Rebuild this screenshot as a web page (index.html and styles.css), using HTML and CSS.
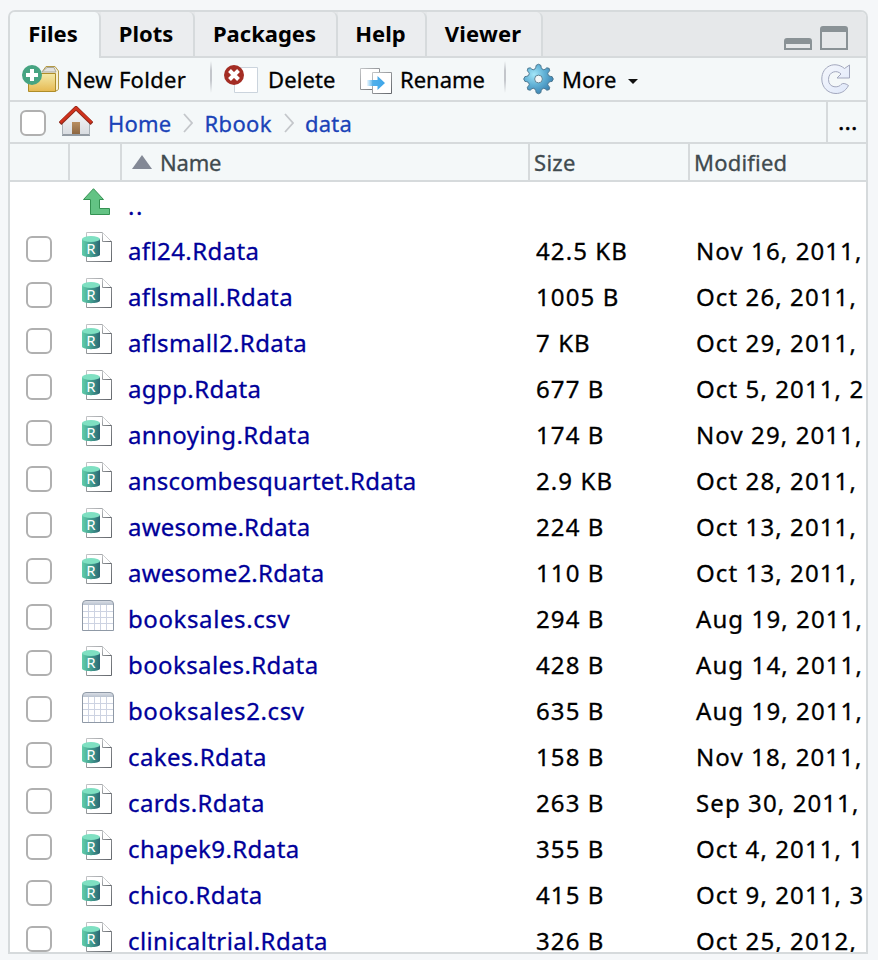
FILE: index.html
```html
<!DOCTYPE html>
<html lang="en">
<head>
<meta charset="utf-8">
<title>Files</title>
<link rel="stylesheet" href="styles.css">
</head>
<body>
<svg class="defs" width="0" height="0" aria-hidden="true">
  <defs>
    <linearGradient id="cyl" x1="0" x2="1" y1="0" y2="0"><stop offset="0" stop-color="#62cdaa"/><stop offset=".5" stop-color="#439f90"/><stop offset="1" stop-color="#2b6672"/></linearGradient>
    <linearGradient id="edge" x1="0" x2="1" y1="0" y2="1"><stop offset="0" stop-color="#c4c6c8"/><stop offset="1" stop-color="#62666b"/></linearGradient>
    <linearGradient id="cap" x1="0" x2="0" y1="0" y2="1"><stop offset="0" stop-color="#dde1e8"/><stop offset="1" stop-color="#b9c2cf"/></linearGradient>
    <linearGradient id="gold" x1="0" x2="0" y1="0" y2="1"><stop offset="0" stop-color="#f3eaa9"/><stop offset="1" stop-color="#e6b951"/></linearGradient>
    <linearGradient id="wall" x1="0" x2="0" y1="0" y2="1"><stop offset="0" stop-color="#fafafa"/><stop offset="1" stop-color="#d7dbe0"/></linearGradient>
    <linearGradient id="door" x1="0" x2="0" y1="0" y2="1"><stop offset="0" stop-color="#b98e61"/><stop offset="1" stop-color="#8d6742"/></linearGradient>
    <linearGradient id="arrow" x1="0" x2="1" y1="0" y2="0"><stop offset="0" stop-color="#4fb0ec" stop-opacity=".1"/><stop offset=".35" stop-color="#4fb0ec"/><stop offset="1" stop-color="#3fa5e8"/></linearGradient>
    <linearGradient id="swirl" x1="0" x2="1" y1="0" y2="1"><stop offset="0" stop-color="#f5f7fc"/><stop offset="1" stop-color="#dfe8fa"/></linearGradient>
    <radialGradient id="blue" cx=".35" cy=".35" r=".7"><stop offset="0" stop-color="#a3e6f8"/><stop offset=".5" stop-color="#62b2d6"/><stop offset="1" stop-color="#3b82b2"/></radialGradient>
    <symbol id="rdata" viewBox="0 0 30 30">
      <path d="M4.500.5H20.500L29.500 9.500V29.500H4.500Z" fill="#fff" stroke="url(#edge)"/>
      <path d="M20.500.5V9.500H29.500" fill="#fff" stroke="url(#edge)"/>
      <path d="M0 7V22.500C0 26 18 26 18 22.500V7Z" fill="url(#cyl)"/>
      <ellipse cx="9" cy="7" rx="9" ry="3" fill="#7fe0c2"/>
      <text x="9" y="21.500" class="glyph" text-anchor="middle">R</text>
    </symbol>
    <symbol id="csv" viewBox="0 0 32 31">
      <path d="M.5 30.500V4Q.5.5 4 .5H28Q31.500.5 31.500 4V30.500Z" fill="#fff"/>
      <path d="M.5 5V4Q.5.5 4 .5H28Q31.500.5 31.500 4V5Z" fill="url(#cap)"/>
      <path d="M1 11.500H31M1 17.500H31M1 23.500H31M6.500 5V30M12.500 5V30M18.500 5V30M24.500 5V30" stroke="#cdd3e2" fill="none"/>
      <path d="M.5 30.500V4Q.5.5 4 .5H28Q31.500.5 31.500 4V30.500Z" fill="none" stroke="#8f99a6"/>
    </symbol>
  </defs>
</svg>
<main class="panel">
  <nav class="tabs">
    <a class="tab active">Files</a><a class="tab plots">Plots</a><a class="tab packages">Packages</a><a class="tab help">Help</a><a class="tab viewer">Viewer</a>
    <div class="window-buttons">
      <svg width="28" height="12" viewBox="0 0 28 12"><path d="M0 12V3Q0 0 3 0H25Q28 0 28 3V12ZM2 6V10H26V6Z" fill="#8a9296" fill-rule="evenodd"/></svg>
      <svg width="28" height="24" viewBox="0 0 28 24"><path d="M0 24V3Q0 0 3 0H25Q28 0 28 3V24ZM2 6V22H26V6Z" fill="#8a9296" fill-rule="evenodd"/></svg>
    </div>
  </nav>
  <div class="toolbar">
    <button class="tool new-folder">
      <svg width="38" height="30" viewBox="0 0 38 30">
        <path d="M20 8L24 2.500H33L36.500 7V25Q36 27 33 27" fill="#f7f1d5" stroke="#b49a45"/>
        <path d="M20 8L25 3.500H32L34 8Z" fill="#e2e2df" stroke="#aaa89a"/>
        <path d="M6.500 9.500H33.500V27.500H6.500Z" fill="url(#gold)" stroke="#af8d28"/>
        <circle cx="10" cy="11" r="10" fill="#46a482"/>
        <path d="M10 5V17M4 11H16" stroke="#fff" stroke-width="4"/>
      </svg><span>New Folder</span>
    </button>
    <i class="divider"></i>
    <button class="tool delete">
      <svg width="34" height="30" viewBox="0 0 34 30">
        <path d="M10.500 3.500H33.500V28.500H10.500Z" fill="#fff" stroke="#cbd4dd"/>
        <circle cx="10" cy="11" r="10" fill="#a42d24"/>
        <path d="M5.500 6.500L14.500 15.500M14.500 6.500L5.500 15.500" stroke="#fff" stroke-width="4"/>
      </svg><span>Delete</span>
    </button>
    <button class="tool rename">
      <svg width="32" height="26" viewBox="0 0 32 26">
        <path d="M.5.5H19.500V21.500H.5Z" fill="#fff" stroke="url(#edge)"/>
        <path d="M12.500 4.500H31.500V25.500H12.500Z" fill="#fff" stroke="url(#edge)"/>
        <path d="M7 12H17.500V8L25 15L17.500 22V18H7Z" fill="url(#arrow)"/>
      </svg><span>Rename</span>
    </button>
    <i class="divider second"></i>
    <button class="tool more">
      <svg width="31" height="32" viewBox="-16 -16 32 32">
        <path d="M-3.500 -10.500Q-2.500 -12 -2.500 -14Q0 -16.500 2.500 -14Q2.500 -12 3.500 -10.500L5.500 -9.500Q7 -10 8.500 -11.500Q12 -12 11.500 -8.500Q10 -7 9.500 -5.500L10.500 -3.500Q12 -2.500 14 -2.500Q16.500 0 14 2.500Q12 2.500 10.500 3.500L9.500 5.500Q10 7 11.500 8.500Q12 12 8.500 11.500Q7 10 5.500 9.500L3.500 10.500Q2.500 12 2.500 14Q0 16.500 -2.500 14Q-2.500 12 -3.500 10.500L-5.500 9.500Q-7 10 -8.500 11.500Q-12 12 -11.500 8.500Q-10 7 -9.500 5.500L-10.500 3.500Q-12 2.500 -14 2.500Q-16.500 0 -14 -2.500Q-12 -2.500 -10.500 -3.500L-9.500 -5.500Q-10 -7 -11.500 -8.500Q-12 -12 -8.500 -11.500Q-7 -10 -5.500 -9.500Z" fill="url(#blue)" stroke="#4d7890" stroke-linejoin="round"/>
        <circle r="4" fill="#f4f8f9" stroke="#5d8194"/>
      </svg><span>More</span>
      <svg class="caret" width="10" height="5" viewBox="0 0 10 5"><path d="M0 0H10L5 5Z" fill="#111"/></svg>
    </button>
    <svg class="refresh" width="30" height="30" viewBox="0 0 30 30"><path d="M23.500 4.500L28.500 1V14H16L20 10C16 5.500 7.500 7.500 7.500 15.500C7.500 24.500 18 24 20 20.500Q22.500 18 27.500 21.500C24.500 27.500 19.500 29.500 15 29.500C7 29.500.8 23.500.8 15C.8 2 14-3.500 23.500 4.500Z" fill="url(#swirl)" stroke="#a2a7bd"/></svg>
  </div>
  <div class="path">
    <input type="checkbox" class="check">
    <svg class="home" width="34" height="31" viewBox="0 0 34 31">
      <path d="M3.500 16L17 3L30.500 16V29.500H3.500Z" fill="url(#wall)"/>
      <path d="M3 29H31" stroke="#939ba3" stroke-width="2"/><path d="M3.500 17V29M30.500 17V29" stroke="#a9b0b6"/>
      <path d="M13 16H21V28H13Z" fill="url(#door)"/>
      <path d="M1 17.500L17 2L33 17.500" fill="none" stroke="#8b281a" stroke-width="4"/>
      <path d="M1.500 16.500L17 2L32.500 16.500" fill="none" stroke="#cf321d" stroke-width="2.500"/>
    </svg>
    <a class="crumb">Home</a>
    <svg class="chevron" width="10" height="20" viewBox="0 0 10 20"><path d="M1 1L9 10L1 19" fill="none" stroke="#c4c7cb" stroke-width="1.800"/></svg>
    <a class="crumb rbook">Rbook</a>
    <svg class="chevron" width="10" height="20" viewBox="0 0 10 20"><path d="M1 1L9 10L1 19" fill="none" stroke="#c4c7cb" stroke-width="1.800"/></svg>
    <a class="crumb data">data</a>
    <a class="browse">...</a>
  </div>
  <div class="head cols">
    <div></div><div></div>
    <div class="name-head"><svg width="20" height="14" viewBox="0 0 20 14"><path d="M0 14L10 0L20 14Z" fill="#838996"/></svg>Name</div>
    <div>Size</div><div>Modified</div>
  </div>
  <div class="list">
    <div class="row cols up"><span></span><svg class="icon" width="28" height="28" viewBox="0 0 28 28"><path d="M11.500.7L21.500 11.500H17.500V20.500H27.500V26.500H8.500V11.500H1.500Z" fill="#63c384" stroke="#359253" stroke-linejoin="round"/></svg><a>..</a><span></span><span></span></div>
    <div class="row cols"><input type="checkbox" class="check"><svg class="icon" width="30" height="30"><use href="#rdata"/></svg><a>afl24.Rdata</a><span class="num">42.5 KB</span><span class="num date">Nov 16, 2011,</span></div>
    <div class="row cols"><input type="checkbox" class="check"><svg class="icon" width="30" height="30"><use href="#rdata"/></svg><a>aflsmall.Rdata</a><span class="num">1005 B</span><span class="num date">Oct 26, 2011,</span></div>
    <div class="row cols"><input type="checkbox" class="check"><svg class="icon" width="30" height="30"><use href="#rdata"/></svg><a>aflsmall2.Rdata</a><span class="num">7 KB</span><span class="num date">Oct 29, 2011,</span></div>
    <div class="row cols"><input type="checkbox" class="check"><svg class="icon" width="30" height="30"><use href="#rdata"/></svg><a>agpp.Rdata</a><span class="num">677 B</span><span class="num date">Oct 5, 2011, 2</span></div>
    <div class="row cols"><input type="checkbox" class="check"><svg class="icon" width="30" height="30"><use href="#rdata"/></svg><a>annoying.Rdata</a><span class="num">174 B</span><span class="num date">Nov 29, 2011,</span></div>
    <div class="row cols"><input type="checkbox" class="check"><svg class="icon" width="30" height="30"><use href="#rdata"/></svg><a class="long">anscombesquartet.Rdata</a><span class="num">2.9 KB</span><span class="num date">Oct 28, 2011,</span></div>
    <div class="row cols"><input type="checkbox" class="check"><svg class="icon" width="30" height="30"><use href="#rdata"/></svg><a class="long">awesome.Rdata</a><span class="num">224 B</span><span class="num date">Oct 13, 2011,</span></div>
    <div class="row cols"><input type="checkbox" class="check"><svg class="icon" width="30" height="30"><use href="#rdata"/></svg><a class="long">awesome2.Rdata</a><span class="num">110 B</span><span class="num date">Oct 13, 2011,</span></div>
    <div class="row cols"><input type="checkbox" class="check"><svg class="icon" width="32" height="31"><use href="#csv"/></svg><a class="csv">booksales.csv</a><span class="num">294 B</span><span class="num date">Aug 19, 2011,</span></div>
    <div class="row cols"><input type="checkbox" class="check"><svg class="icon" width="30" height="30"><use href="#rdata"/></svg><a>booksales.Rdata</a><span class="num">428 B</span><span class="num date">Aug 14, 2011,</span></div>
    <div class="row cols"><input type="checkbox" class="check"><svg class="icon" width="32" height="31"><use href="#csv"/></svg><a class="csv">booksales2.csv</a><span class="num">635 B</span><span class="num date">Aug 19, 2011,</span></div>
    <div class="row cols"><input type="checkbox" class="check"><svg class="icon" width="30" height="30"><use href="#rdata"/></svg><a>cakes.Rdata</a><span class="num">158 B</span><span class="num date">Nov 18, 2011,</span></div>
    <div class="row cols"><input type="checkbox" class="check"><svg class="icon" width="30" height="30"><use href="#rdata"/></svg><a>cards.Rdata</a><span class="num">263 B</span><span class="num date">Sep 30, 2011,</span></div>
    <div class="row cols"><input type="checkbox" class="check"><svg class="icon" width="30" height="30"><use href="#rdata"/></svg><a>chapek9.Rdata</a><span class="num">355 B</span><span class="num date">Oct 4, 2011, 1</span></div>
    <div class="row cols"><input type="checkbox" class="check"><svg class="icon" width="30" height="30"><use href="#rdata"/></svg><a>chico.Rdata</a><span class="num">415 B</span><span class="num date">Oct 9, 2011, 3</span></div>
    <div class="row cols"><input type="checkbox" class="check"><svg class="icon" width="30" height="30"><use href="#rdata"/></svg><a>clinicaltrial.Rdata</a><span class="num">326 B</span><span class="num date">Oct 25, 2012,</span></div>
  </div>
</main>
</body>
</html>
```
FILE: styles.css
```css
* { box-sizing: border-box; }
body {
  margin: 0;
  height: 960px;
  padding: 10px 10px 6px 8px;
  overflow: hidden;
  background: #f5f7f9;
  font: 22px/30px "Noto Sans", "Open Sans", sans-serif;
  color: #000;
  -webkit-text-stroke: .3px currentColor;
}
svg { display: block; flex: none; }
.defs { position: absolute; }
.panel {
  height: 944px;
  display: flex;
  flex-direction: column;
  border: 2px solid #d6dadc;
  border-radius: 7px 7px 0 0;
  background: #f4f8f9;
  overflow: hidden;
}
.tabs {
  height: 46px;
  flex: none;
  display: flex;
  background: #e6e8ea;
  -webkit-text-stroke: 0;
}
.tab {
  height: 46px;
  padding-right: 2px;
  border-right: 2px solid #d6dadc;
  border-bottom: 2px solid #d6dadc;
  border-top-right-radius: 6px;
  background: #ebedef;
  font-weight: 700;
  line-height: 43px;
  text-align: center;
}
.tab.active { width: 91px; padding-right: 3px; background: #f4f8f9; border-bottom: 0; }
.plots { width: 94px; }
.packages { width: 143px; }
.help { width: 89px; }
.viewer { width: 116px; letter-spacing: .2px; }
.window-buttons {
  flex: 1;
  display: flex;
  justify-content: flex-end;
  align-items: flex-end;
  gap: 8px;
  padding: 0 18px 6px 0;
  border-bottom: 2px solid #d6dadc;
}
.toolbar {
  height: 44px;
  flex: none;
  display: flex;
  align-items: center;
  padding-left: 12px;
  border-bottom: 2px solid #d6dadc;
}
.tool {
  display: flex;
  align-items: center;
  padding: 0;
  border: 0;
  background: none;
  font: inherit;
  color: inherit;
  letter-spacing: .3px;
  -webkit-text-stroke: .3px currentColor;
}
.new-folder { gap: 6px; width: 188px; }
.delete { gap: 10px; width: 136px; letter-spacing: .1px; }
.rename { gap: 8px; width: 144px; letter-spacing: 0; }
.rename svg { margin-top: 3px; }
.more { gap: 8px; letter-spacing: 0; }
.caret { margin: 4px 0 0 4px; }
.divider {
  width: 2px;
  height: 32px;
  margin: 0 12px 4px 0;
  background: linear-gradient(transparent, #c3c6cb 30%, #c3c6cb 60%, transparent);
}
.divider.second { margin-right: 17px; }
.refresh { margin: 0 15px 0 auto; }
.path {
  height: 42px;
  flex: none;
  display: flex;
  align-items: center;
  padding-left: 10px;
  border-bottom: 2px solid #d6dadc;
}
.check {
  appearance: none;
  width: 26px;
  height: 26px;
  margin: 0;
  border: 2px solid #b0b0b0;
  border-radius: 6px;
  background: #fff;
}
.path .check { margin-top: 2px; }
.home { margin: 0 15px 2px 13px; }
.crumb { padding-top: 2px; color: #1a43b8; letter-spacing: .2px; line-height: 40px; }
.rbook { letter-spacing: .4px; }
.chevron { margin: 2px 11px 0 12px; }
.browse {
  width: 40px;
  height: 40px;
  margin-left: auto;
  padding-left: 2px;
  border-left: 2px solid #d6dadc;
  line-height: 38px;
  letter-spacing: .6px;
  text-align: center;
  -webkit-text-stroke: .6px currentColor;
}
.cols { display: grid; grid-template-columns: 60px 52px 408px 160px 176px; }
.head {
  height: 38px;
  flex: none;
  border-bottom: 2px solid #d6dadc;
  color: #404a4f;
  line-height: 36px;
}
.head > div { padding-left: 4px; border-right: 2px solid #d6dadc; letter-spacing: .3px; }
.head > div:last-child { border-right: 0; letter-spacing: .2px; }
.head .name-head { display: flex; align-items: center; gap: 8px; padding-left: 10px; letter-spacing: -.2px; }
.list {
  flex: 1;
  min-height: 0;
  overflow: hidden;
  background: #fff;
}
.row {
  height: 46px;
  align-items: center;
  font-size: 24px;
  line-height: 30px;
}
.up { height: 44px; }
.row > .check { margin-left: 16px; }
.row > .icon { margin: 0 0 4px 12px; }
.row > a { padding: 3px 0 0 6px; color: #00009a; letter-spacing: .4px; }
.row > .long { letter-spacing: .22px; }
.row > .csv { letter-spacing: .6px; }
.up > a { letter-spacing: 1.500px; }
.row > .num { padding: 3px 0 0 6px; letter-spacing: 1.100px; white-space: nowrap; }
.row > .date { width: 173px; overflow: hidden; }
.glyph { font: 15px "Noto Sans", sans-serif; fill: #fff; -webkit-text-stroke: 0; }
```
